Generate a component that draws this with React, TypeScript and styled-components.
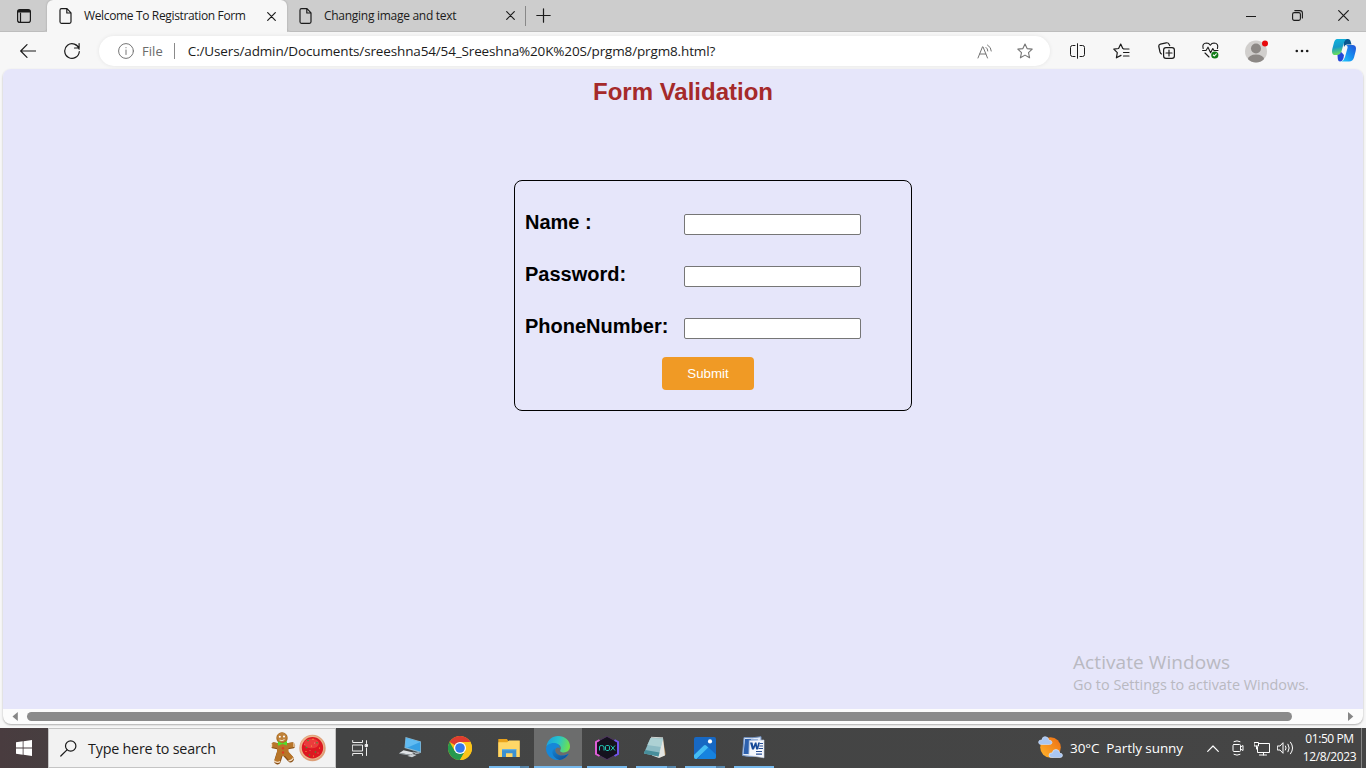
import React from "react";
import styled, { createGlobalStyle } from "styled-components";

const GlobalStyle = createGlobalStyle`
  * { box-sizing: border-box; }
  body { margin: 0; overflow: hidden; font-family: "Open Sans", "Noto Sans", sans-serif; }
  svg { display: block; flex: none; }
`;

const Screen = styled.div`
  width: 1366px;
  height: 768px;
  display: flex;
  flex-direction: column;
  background: #f7f7f7;
`;

const TabStrip = styled.header`
  height: 32px;
  flex: none;
  display: flex;
  background: #cdcdcd;
`;

const TabMenu = styled.div`
  width: 47px;
  display: flex;
  align-items: center;
  padding-left: 17px;
  border-bottom: 1px solid #bdbdbd;
  border-bottom-right-radius: 4px;
`;

const Tab = styled.div<{ $active?: boolean; $width: number }>`
  width: ${(p) => p.$width}px;
  display: flex;
  align-items: center;
  padding: 0 ${(p) => (p.$active ? 11 : 10)}px 0 12px;
  background: ${(p) => (p.$active ? "#f7f7f7" : "transparent")};
  border-radius: ${(p) => (p.$active ? "6px 6px 0 0" : "0 0 0 4px")};
  border-bottom: ${(p) => (p.$active ? "none" : "1px solid #bdbdbd")};
  box-shadow: ${(p) => (p.$active ? "0 0 2px #999" : "none")};
  clip-path: ${(p) => (p.$active ? "inset(0 -3px 0 -3px)" : "none")};
`;

const Label = styled.span<{ $size: number; $spacing?: number; $color?: string }>`
  font-size: ${(p) => p.$size}px;
  letter-spacing: ${(p) => p.$spacing ?? 0}px;
  color: ${(p) => p.$color ?? "#1b1b1b"};
  line-height: 20px;
  white-space: nowrap;
`;

const TabTitle = styled(Label)`
  flex: 1;
  margin-left: 12px;
`;

const NewTab = styled.div`
  flex: 1;
  display: flex;
  align-items: center;
  gap: 10px;
  border-bottom: 1px solid #bdbdbd;
`;

const Rule = styled.i<{ $height: number; $color: string }>`
  width: 1px;
  height: ${(p) => p.$height}px;
  background: ${(p) => p.$color};
`;

const WindowButtons = styled.div`
  display: flex;
  width: 138px;
  border-bottom: 1px solid #bdbdbd;
`;

const Slot = styled.div<{ $width: number }>`
  width: ${(p) => p.$width}px;
  flex: none;
  display: flex;
  align-items: center;
  justify-content: center;
`;

const Toolbar = styled.nav`
  height: 37px;
  flex: none;
  display: flex;
  padding-left: 6px;
`;

const AddressBar = styled.div`
  width: 951px;
  height: 30px;
  margin: 4px 5px 0 5px;
  padding: 0 5px 0 19px;
  display: flex;
  align-items: center;
  border-radius: 15px;
  background: #fff;
  box-shadow: 0 0 4px rgba(0, 0, 0, 0.08);
`;

const FileLabel = styled(Label)`
  margin: 0 11px 0 8px;
`;

const Url = styled(Label)`
  flex: 1;
  margin-left: 13px;
`;

const Viewport = styled.main`
  height: 655px;
  margin: 0 3px 4px;
  flex: none;
  display: flex;
  flex-direction: column;
  border-radius: 8px;
  overflow: hidden;
  background: #fcfcfc;
  box-shadow: 0 1px 2px rgba(0, 0, 0, 0.3);
`;

const Page = styled.section`
  height: 640px;
  position: relative;
  background: #e6e6fa;
  font-family: "Liberation Sans", Arial, sans-serif;
`;

const Heading = styled.h2`
  margin: 0;
  padding-top: 9px;
  font-size: 24px;
  line-height: 28px;
  text-align: center;
  color: #a52a2a;
`;

const Form = styled.form`
  width: 398px;
  height: 231px;
  margin: 74px 0 0 511px;
  padding: 27px 10px 0;
  border: 1px solid #000;
  border-radius: 8px;
`;

const Field = styled.label`
  height: 52px;
  display: grid;
  grid-template-columns: 159px 177px;
  align-items: start;
  font-size: 20px;
  font-weight: bold;
  line-height: 28px;
`;

const Input = styled.input`
  width: 177px;
  height: 21px;
  margin: 6px 0 0;
  border: 1px solid #767676;
  border-radius: 2px;
  background: #fff;
`;

const Submit = styled.button`
  display: block;
  width: 92px;
  height: 33px;
  margin: -7px 0 0 137px;
  padding: 0;
  border: 0;
  border-radius: 4px;
  background: #f09a25;
  color: #fff;
  font: 13.333px "Liberation Sans", Arial, sans-serif;
`;

const Watermark = styled.div`
  position: absolute;
  left: 1070px;
  top: 580px;
  display: flex;
  flex-direction: column;
  font-family: "Open Sans", sans-serif;
`;

const WatermarkTitle = styled(Label)`
  line-height: 26px;
`;

const ScrollBar = styled.div`
  height: 15px;
  display: flex;
  align-items: center;
  padding: 0 9px 0 9px;
`;

const Thumb = styled.div`
  width: 1265px;
  height: 9px;
  margin: 0 auto 0 9px;
  border-radius: 5px;
  background: #8b8b8b;
`;

const Taskbar = styled.footer`
  height: 40px;
  flex: none;
  display: flex;
  background: linear-gradient(90deg, #493c3f 0, #473e40 48px, #434444 340px, #454545 100%);
`;

const Search = styled.div`
  width: 288px;
  display: flex;
  align-items: center;
  padding: 0 9px 0 11px;
  border: 1px solid #c4c4c4;
  background: #f2f2f2;
`;

const SearchLabel = styled(Label)`
  flex: 1;
  margin-left: 11px;
  padding-top: 1px;
`;

const Apps = styled.div`
  display: flex;
  padding-left: 2px;
`;

const AppButton = styled.div<{ $active?: boolean }>`
  width: 49px;
  display: flex;
  flex-direction: column;
  align-items: center;
  justify-content: space-between;
  padding-top: 8px;
  background: ${(p) => (p.$active ? "linear-gradient(90deg,transparent 1px,#6c6d6d 1px)" : "transparent")};
`;

const Running = styled.i<{ $wide?: boolean; $stacked?: boolean }>`
  width: ${(p) => (p.$wide ? 48 : 40)}px;
  margin-left: ${(p) => (p.$wide ? 1 : 0)}px;
  height: 2px;
  background: ${(p) => (p.$stacked ? "linear-gradient(90deg,#76b9ed 31px,#5480a3 31px,#5a8bb1 40px)" : "#76b9ed")};
`;

const Weather = styled.div`
  display: flex;
  align-items: center;
  margin-left: auto;
  gap: 7px;
  width: 163px;
`;

const Tray = styled.div`
  display: flex;
  align-items: center;
`;

const Clock = styled.div`
  width: 63px;
  display: flex;
  flex-direction: column;
  align-items: center;
  padding-top: 2px;
`;

const ClockLine = styled(Label)`
  line-height: 18px;
`;

const ShowDesktop = styled.div`
  width: 5px;
  border-left: 1px solid #858585;
`;

type IconProps = { w: number; h: number; color?: string; sw?: number; children: React.ReactNode };

const Icon = ({ w, h, color = "#1b1b1b", sw = 1, children }: IconProps) => (
  <svg width={w} height={h} viewBox={`0 0 ${w} ${h}`} fill="none" stroke={color} strokeWidth={sw} strokeLinecap="round" strokeLinejoin="round">
    {children}
  </svg>
);

const PageIcon = () => (
  <Icon w={13} h={16} sw={1.2}>
    <path d="M2.5 .7H8L12 4.8V13.8Q12 15.3 10.5 15.3H2.5Q1 15.3 1 13.8V2.2Q1 .7 2.5 .7ZM7.8 1V5H12" />
  </Icon>
);

const CloseIcon = ({ size = 9 }: { size?: number }) => (
  <Icon w={size} h={size} sw={1.2}>
    <path d={`M.7 .7L${size - 0.7} ${size - 0.7}M${size - 0.7} .7L.7 ${size - 0.7}`} />
  </Icon>
);

const StartIcon = () => (
  <svg width="16" height="16" viewBox="0 0 16 16" fill="#fff">
    <path d="M0 2.3L6.7 1.3V7.5H0ZM7.5 1.2L16 0V7.5H7.5ZM0 8.4H6.7V14.7L0 13.7ZM7.5 8.4H16V16L7.5 14.8Z" />
  </svg>
);

const Gingerbread = () => (
  <svg width="26" height="33" viewBox="0 0 26 33">
    <g fill="none" stroke="#8a4f14" strokeLinecap="round">
      <path d="M4 13.5L12 15L22 13.5" strokeWidth="6.2" />
      <path d="M10 21L7.5 29M15 21L20.5 27" strokeWidth="6.6" />
    </g>
    <g fill="none" stroke="#b87528" strokeLinecap="round">
      <path d="M4 13L12 14.5L22 13" strokeWidth="5" />
      <path d="M10 20L7.5 28M15 20L20.5 26" strokeWidth="5.4" />
    </g>
    <rect x="7" y="11" width="11.5" height="13" rx="4" fill="#b87528" />
    <circle cx="12" cy="6" r="5.7" fill="#a9691f" />
    <circle cx="12" cy="5.6" r="4.8" fill="#be8139" />
    <g fill="#fff"><circle cx="9.8" cy="4.8" r="1" /><circle cx="14" cy="4.4" r="1" /></g>
    <path d="M9.5 8Q12 9.6 14.5 7.5" fill="none" stroke="#f2dfbd" />
    <path d="M7.8 9.3L12.5 11.3L17 9V13.5L12.5 12L8 13.8Z" fill="#52dd2b" />
    <circle cx="13" cy="16.3" r="1.2" fill="#dc3c22" /><circle cx="13" cy="20.5" r="1.2" fill="#dc3c22" />
    <path d="M1.6 11.5V15.5M24 11V15M3.8 28.8Q7 31.5 10.2 29.5M18.3 29Q22.5 28.5 23.4 25.8" fill="none" stroke="#f3dfc8" strokeWidth="1.2" />
  </svg>
);

const Cookie = () => (
  <svg width="27" height="28" viewBox="0 0 27 28">
    <circle cx="13.5" cy="14" r="13.2" fill="#dd9f78" />
    <circle cx="13" cy="13.5" r="12" fill="#edb48c" />
    <circle cx="13.5" cy="13.8" r="10.7" fill="#dd1821" />
    <ellipse cx="12.5" cy="9.5" rx="7.5" ry="4.8" fill="#f14b48" opacity=".7" />
    <g fill="#33a13b"><circle cx="9" cy="6.5" r=".8" /><circle cx="18" cy="8.7" r=".8" /><circle cx="7.5" cy="13.5" r=".8" /><circle cx="16.5" cy="18" r=".8" /><circle cx="10.5" cy="21" r=".8" /></g>
    <g fill="#ffb23e"><circle cx="14" cy="5.2" r=".6" /><circle cx="12.5" cy="12" r=".6" /><circle cx="20.5" cy="14" r=".6" /><circle cx="7" cy="17.5" r=".6" /><circle cx="14.5" cy="22" r=".6" /></g>
    <g fill="#ffe5d9"><circle cx="15.5" cy="9" r=".4" /><circle cx="5.8" cy="10.8" r=".4" /><circle cx="11" cy="16.3" r=".4" /><circle cx="19" cy="19" r=".4" /></g>
  </svg>
);

const ComputerIcon = () => (
  <svg width="24" height="24" viewBox="0 0 24 24">
    <path d="M6.5 1L22 5.5V17L5.5 12Z" fill="#8fb9cf" />
    <path d="M7 2L21.3 6V15.5L6.5 11.3Z" fill="#369fe4" />
    <path d="M7 2L21.3 6L8 11.8L6.5 11.3Z" fill="#60bbf2" />
    <path d="M4.5 14.3L15.5 16.7L11.5 18.7L.5 17Z" fill="#dfe2e5" />
    <path d="M.5 17L11.5 18.7L10.5 19.6L0 17.8Z" fill="#9ca5ab" />
    <path d="M14 15.5L17 16.5L20.5 16V17.5L16.5 18.3Z" fill="#aab3b9" />
    <path d="M8.5 20L13.5 18L17.5 19L13 21.3Z" fill="#cbd0d4" />
  </svg>
);

const ChromeIcon = () => (
  <svg width="24" height="24" viewBox="0 0 24 24">
    <circle cx="12" cy="12" r="12" fill="#fbc116" />
    <path d="M12 12L1.6 6A12 12 0 0 1 22.4 6H12Z" fill="#df3c30" />
    <path d="M1.6 6A12 12 0 0 0 12 24L17.2 15L12 12L6.8 15Z" fill="#26994d" />
    <path d="M12 6H22.4A12 12 0 0 1 12 24L17.2 15Z" fill="#fcc419" />
    <circle cx="12" cy="12" r="6.1" fill="#fff" />
    <circle cx="12" cy="12" r="4.8" fill="#3478ec" />
  </svg>
);

const FolderIcon = () => (
  <svg width="24" height="24" viewBox="0 0 24 24">
    <path d="M1.3 3H10L11.2 5H22.5V21H1.3Z" fill="#e9a21b" />
    <path d="M1.3 6.2H10.2L12 4.4H22.7V21H1.3Z" fill="#ffd767" />
    <path d="M5 21V13.2H19.3V21H15.5V17.2H9V21Z" fill="#3b91d2" />
    <path d="M5 13.2H19.3V14.2H5Z" fill="#69b6e8" />
  </svg>
);

const EdgeIcon = () => (
  <svg width="24" height="24" viewBox="0 0 24 24">
    <defs>
      <linearGradient id="eg" x1="0" x2="1" y1=".2" y2=".4"><stop stopColor="#1a9fe0" /><stop offset=".5" stopColor="#27c4cb" /><stop offset="1" stopColor="#6ee14e" /></linearGradient>
      <linearGradient id="eb" x1="0" x2="1" y1="0" y2="1"><stop stopColor="#1484d4" /><stop offset="1" stopColor="#114a8e" /></linearGradient>
    </defs>
    <path d="M.3 10.5C1.5 4 6.3 0 12 0C19 0 24 4.6 24 10.3C24 14.5 21 16.5 17.8 16.5C14.8 16.5 13.5 15 14.5 13.7C15.7 12 14.5 8.3 10 8C5 7.6 1.7 9.5 .3 10.5Z" fill="url(#eg)" />
    <path d="M0 12.5C.2 8.7 4.8 6.4 9 7C12.2 7.5 14.2 9.7 13.7 12C12.2 10.7 9 11.5 9.2 14.7C9.5 18.5 14.5 21.4 20 18.7C21.4 18 22.4 17.5 22.6 17.8C19.5 24 11.8 25.5 6 22.4C2.4 20.5 0 16.8 0 12.5Z" fill="#1687d8" />
    <path d="M9.4 12.2C3.8 14 6.2 22 13.5 24C17.8 23.5 21.2 20.7 22.6 17.8C17.5 21 11.5 19.5 9.6 16.2C8.8 14.7 8.8 13.3 9.4 12.2Z" fill="url(#eb)" />
  </svg>
);

const NoxIcon = () => (
  <svg width="24" height="24" viewBox="0 0 24 24" fill="none">
    <path d="M12 .4L22.8 6.2V17.8L12 23.6L1.2 17.8V6.2Z" fill="#15121e" stroke="#56326b" strokeWidth=".8" />
    <path d="M4.5 4L1 6V18L4.5 20" stroke="#df5ed6" strokeWidth="2" />
    <path d="M19.5 4L23 6V18L19.5 20" stroke="#7154ed" strokeWidth="2" />
    <path d="M4.5 14.5V11Q4.5 9.5 6.3 9.5Q9 9.5 9 11V14.5M10.5 10.7Q10.5 9.5 11.5 9.5H13.2Q14.5 9.5 14.5 10.7V13Q14.5 14.5 13.2 14.5H11.5Q10.5 14.5 10.5 13ZM15.8 9.5L20 14.5M20 9.5L15.8 14.5" stroke="#22c9b5" />
  </svg>
);

const NotepadIcon = () => (
  <svg width="24" height="24" viewBox="0 0 24 24">
    <path d="M19 3L21.8 18.5L16 21.5Z" fill="#a47a42" />
    <path d="M19 2L21 19.5L15 22L8 19.5Z" fill="#e3e5e2" />
    <path d="M6.5 2L19 2.3L14.5 20.5L-.2 17.5Z" fill="#8cbbc4" />
    <path d="M6.5 2L19 2.3L17 11L3.3 9Z" fill="#b8d8d9" opacity=".75" />
    <path d="M-.2 17.5L14.5 20.5L15.5 16.5L1.3 14Z" fill="#478e9b" />
    <path d="M7 1.3L19 1.8" stroke="#cfd5d3" strokeWidth="1" />
  </svg>
);

const PhotosIcon = () => (
  <svg width="24" height="24" viewBox="0 0 24 24">
    <rect x="1" y="1" width="22" height="22" rx="2" fill="#1768c3" />
    <path d="M12 14L14.5 10.5L23 18.5V21Q23 23 21 23H5Z" fill="#1683df" />
    <path d="M1 19L10.8 9.4Q12 8.4 13.2 9.4L15.2 11.4L3.5 23H3Q1 23 1 21Z" fill="#45bdf4" />
    <circle cx="17" cy="5.4" r="2.1" fill="#fff" />
  </svg>
);

const WordIcon = () => (
  <svg width="24" height="24" viewBox="0 0 24 24">
    <path d="M2 1.5Q10 2.5 19 .7V18.5Q9 22 .5 19.5Z" fill="#dfe9f7" stroke="#7292c3" />
    <path d="M3 3H9L7 18H1.5Z" fill="#2d60ad" />
    <path d="M6.5 3.5L16 3.5L14 19L6 18Z" fill="#4e7bbd" />
    <path d="M7.5 4.7L22 4V21.8L7 19.5Z" fill="#f5f7fb" stroke="#c7d3e7" strokeWidth=".6" />
    <path d="M8 6.5H10.5L11.4 10.5L13 6.5H14.5L15.2 10.5L16.2 6.5H18L16 13.5H14.2L13.4 10L11.9 13.5H10Z" fill="#174a98" />
    <path d="M17.8 7.5H21M17.3 10H21M16.5 12.5H21M14 15.5H20M14 18.2H20" stroke="#284f95" strokeWidth="1.2" />
  </svg>
);

const CopilotIcon = () => (
  <svg width="24" height="23" viewBox="0 0 24 23">
    <defs>
      <linearGradient id="ca" x1="0" x2=".2" y1="0" y2="1"><stop stopColor="#10b5df" /><stop offset=".55" stopColor="#169ac9" /><stop offset="1" stopColor="#6ce05a" /></linearGradient>
      <linearGradient id="cb" x1="1" x2="0" y1="0" y2="1"><stop stopColor="#2451d6" /><stop offset=".5" stopColor="#168df0" /><stop offset="1" stopColor="#22cbfb" /></linearGradient>
    </defs>
    <path d="M11 0H16Q18.2 0 18.8 3L19.5 5.5H15Q12.8 5.5 12 8Z" fill="#07568f" />
    <path d="M5 0H15Q12.6 1 11.8 4L9.5 12.5Q8.4 16 5.5 16H3.5Q-1 16 .3 10L2 3.5Q3 0 5 0Z" fill="url(#ca)" />
    <path d="M14 6H20.5Q25 6 23.7 12L22 18.5Q20.8 22.5 17 22.5H9.5Q12 21.5 13 18L15.5 9Q16 6.5 14 6Z" fill="url(#cb)" />
    <path d="M5.5 16Q8 16 9.2 13L12 16L11.5 19Q10.3 22.5 8 22.5Q6.2 22.5 5.8 20Z" fill="#2348d7" />
  </svg>
);

const WeatherIcon = () => (
  <svg width="26" height="24" viewBox="-1 0 26 24">
    <defs><linearGradient id="sun" x1="0" x2="1" y1="1" y2="0"><stop stopColor="#ffb52c" /><stop offset="1" stopColor="#ed6d13" /></linearGradient></defs>
    <circle cx="12.5" cy="11.5" r="10.3" fill="url(#sun)" />
    <path d="M3.2 8.5H11.5Q14 8.5 14 6.3Q13.8 4.2 11 4.3Q10.3 .5 6.9 .7Q4 .9 4 4Q.6 3.8 .6 6.3Q.7 8.5 3.2 8.5Z" fill="#a9c6f2" stroke="#cbdcf8" strokeWidth=".7" />
    <path d="M13.5 21.5H22Q24.5 21.5 24.5 19.3Q24.3 17.1 21.8 17.3Q21.2 13.5 18 13.5Q14.7 13.5 14.4 16.8Q11 16.7 11 19.2Q11 21.5 13.5 21.5Z" fill="#a9c6f2" stroke="#d9e6fb" strokeWidth=".7" />
  </svg>
);

const starPath = "M8 1L10.1 5.6L15.2 6.1L11.5 9.6L12.6 14.8L8 12.1L3.4 14.8L4.5 9.6L.8 6.1L5.9 5.6Z";

const apps: { icon: React.ReactNode; run?: boolean; active?: boolean; stacked?: boolean }[] = [
  { icon: <ComputerIcon /> },
  { icon: <ChromeIcon /> },
  { icon: <FolderIcon />, run: true, stacked: true },
  { icon: <EdgeIcon />, run: true, active: true },
  { icon: <NoxIcon />, run: true },
  { icon: <NotepadIcon />, run: true, stacked: true },
  { icon: <PhotosIcon />, run: true, stacked: true },
  { icon: <WordIcon />, run: true },
];

export default function App() {
  return (
    <Screen>
      <GlobalStyle />
      <TabStrip>
        <TabMenu>
          <Icon w={14} h={14} sw={1.2}>
            <rect x=".6" y=".6" width="12.8" height="12.8" rx="2.2" />
            <path d="M1.5 1.5H12.5V3H1.5Z" fill="#1b1b1b" />
            <path d="M3.5 4V13" />
          </Icon>
        </TabMenu>
        <Tab $active $width={240}>
          <PageIcon />
          <TabTitle $size={12} $spacing={-0.35}>Welcome To Registration Form</TabTitle>
          <CloseIcon />
        </Tab>
        <Tab $width={238}>
          <PageIcon />
          <TabTitle $size={12} $spacing={-0.28}>Changing image and text</TabTitle>
          <CloseIcon />
        </Tab>
        <NewTab>
          <Rule $height={20} $color="#888" />
          <Icon w={15} h={15} sw={1.2}><path d="M7.5 .8V14.2M.8 7.5H14.2" /></Icon>
        </NewTab>
        <WindowButtons>
          <Slot $width={46}><Icon w={10} h={10}><path d="M0 5.5H10" /></Icon></Slot>
          <Slot $width={46}>
            <Icon w={11} h={11} sw={1.1}><rect x=".6" y="2.6" width="7.8" height="7.8" rx="1.6" /><path d="M2.8 .6H8Q10.4 .6 10.4 3V8" /></Icon>
          </Slot>
          <Slot $width={46}><CloseIcon size={11} /></Slot>
        </WindowButtons>
      </TabStrip>

      <Toolbar>
        <Slot $width={44}><Icon w={16} h={14} sw={1.2}><path d="M7 .7L.7 7L7 13.3M1 7H15.5" /></Icon></Slot>
        <Slot $width={44}><Icon w={18} h={17} sw={1.2}><path d="M16.1 7.2A7.3 7.3 0 1 0 16.3 9.5M16.1 1.5V6H11.5" /></Icon></Slot>
        <AddressBar>
          <Icon w={16} h={16} color="#757575"><circle cx="8" cy="8" r="7.4" /><path d="M8 7V11.5M8 4.6V4.8" /></Icon>
          <FileLabel $size={13} $spacing={0.05} $color="#6b6b6b">File</FileLabel>
          <Rule $height={16} $color="#8a8a8a" />
          <Url $size={13.5} $spacing={-0.14}>C:/Users/admin/Documents/sreeshna54/54_Sreeshna%20K%20S/prgm8/prgm8.html?</Url>
          <Slot $width={40}>
            <Icon w={16} h={15} color="#757575"><path d="M1 14L5.5 2.8H6L10.5 14M2.7 10H8.8M9 3.4Q10.8 4.5 10.8 7M10.5 1Q14.3 3.2 14.3 7" /></Icon>
          </Slot>
          <Slot $width={40}><Icon w={16} h={16} color="#757575" sw={1.1}><path d={starPath} /></Icon></Slot>
        </AddressBar>
        <Slot $width={44}>
          <Icon w={15} h={16}><path d="M5 2.5H2.5Q.5 2.5 .5 4.5V11.5Q.5 13.5 2.5 13.5H5M10 2.5H12.5Q14.5 2.5 14.5 4.5V11.5Q14.5 13.5 12.5 13.5H10M7.5 .7V15.3" /></Icon>
        </Slot>
        <Slot $width={45}>
          <Icon w={17} h={16} sw={1.2}><path d="M11.5 6L9.8 5.5L7.7 1L5.6 5.5L.8 6.1L4.3 9.6L3.4 14.8L8 12.4M10.5 6H16M10.5 9.5H16M10.5 13H16" /></Icon>
        </Slot>
        <Slot $width={44}>
          <Icon w={17} h={17} sw={1.2}><rect x="5.6" y="5.6" width="10.8" height="10.8" rx="2.4" /><path d="M11 8V14M8 11H14M3.5 12Q2.5 11.6 2 10L.8 4.5Q.5 2.6 2.4 2.1L8.2 .8Q10.3 .4 11.2 2.5L11.7 3.5" /></Icon>
        </Slot>
        <Slot $width={44}>
          <Icon w={17} h={17} sw={1.1}>
            <path d="M1.2 6.5Q-.2 1.2 4.5 1Q7 1 8.3 3.2Q9.7 1 12 1Q16.8 1.2 15.4 6.5M.6 8.5H4L6 5.2L8.6 10.8L10.8 6.5L12 8.5H16M3 11L7 15" />
            <circle cx="12.8" cy="13" r="3.6" fill="#0f7b16" stroke="none" /><path d="M11.3 13L12.4 14L14.3 11.8" stroke="#fff" />
          </Icon>
        </Slot>
        <Slot $width={48}>
          <svg width="24" height="24" viewBox="0 0 24 24">
            <defs><clipPath id="face"><circle cx="12" cy="12.5" r="11" /></clipPath></defs>
            <circle cx="12" cy="12.5" r="11" fill="#d1cfcd" />
            <g fill="#8c8885" clipPath="url(#face)"><circle cx="12" cy="9.5" r="5" /><ellipse cx="12" cy="20.5" rx="8.2" ry="5" /></g>
            <circle cx="21" cy="4.5" r="3" fill="#e8090d" />
          </svg>
        </Slot>
        <Slot $width={44}>
          <svg width="14" height="4" viewBox="0 0 14 4" fill="#1b1b1b"><circle cx="1.8" cy="2" r="1.3" /><circle cx="7" cy="2" r="1.3" /><circle cx="12.2" cy="2" r="1.3" /></svg>
        </Slot>
        <Slot $width={40}><CopilotIcon /></Slot>
      </Toolbar>

      <Viewport>
        <Page>
          <Heading>Form Validation</Heading>
          <Form onSubmit={(e) => e.preventDefault()}>
            <Field>Name :<Input type="text" /></Field>
            <Field>Password:<Input type="password" /></Field>
            <Field>PhoneNumber:<Input type="text" /></Field>
            <Submit>Submit</Submit>
          </Form>
          <Watermark>
            <WatermarkTitle $size={19} $spacing={0.08} $color="#b9b9c1">Activate Windows</WatermarkTitle>
            <Label $size={14.4} $color="#b9b9c1">Go to Settings to activate Windows.</Label>
          </Watermark>
        </Page>
        <ScrollBar>
          <svg width="6" height="9" viewBox="0 0 6 9" fill="#868686"><path d="M5.8 0V9L.5 4.5Z" /></svg>
          <Thumb />
          <svg width="6" height="9" viewBox="0 0 6 9" fill="#868686"><path d="M0 0V9L5.3 4.5Z" /></svg>
        </ScrollBar>
      </Viewport>

      <Taskbar>
        <Slot $width={48}><StartIcon /></Slot>
        <Search>
          <Icon w={17} h={17} sw={1.2}><circle cx="10.7" cy="6" r="5.2" /><path d="M7 9.8L.8 16" /></Icon>
          <SearchLabel $size={14.3} $spacing={-0.2}>Type here to search</SearchLabel>
          <Gingerbread />
          <Slot $width={3} />
          <Cookie />
        </Search>
        <Slot $width={48}>
          <Icon w={17} h={16} color="#eee"><path d="M.7 .5V2.5H10.5V.5M.7 15.5V13.5H10.5V15.5M.7 5H10.5V11H.7ZM14.5 .7V3.5M14.5 8V15.5" /><rect x="13.5" y="4.5" width="2" height="2" fill="#fff" /></Icon>
        </Slot>
        <Apps>
          {apps.map((a, i) => (
            <AppButton key={i} $active={a.active}>
              {a.icon}
              {a.run && <Running $wide={a.active} $stacked={a.stacked} />}
            </AppButton>
          ))}
        </Apps>
        <Weather>
          <WeatherIcon />
          <Label $size={13.5} $spacing={-0.08} $color="#fff">30°C&nbsp; Partly sunny</Label>
        </Weather>
        <Tray>
          <Slot $width={25}><Icon w={12} h={7} color="#fff" sw={1.2}><path d="M.7 6.3L6 1L11.3 6.3" /></Icon></Slot>
          <Slot $width={25}><Icon w={12} h={16} color="#fff"><rect x="1" y="4.5" width="7.5" height="7" rx="1" /><path d="M8.5 7L11 5.5V10.5L8.5 9M2 1.6Q5 0 8 1.6M2 14.4Q5 16 8 14.4" /></Icon></Slot>
          <Slot $width={23}><Icon w={16} h={15} color="#fff"><path d="M5 2.5H15.5V11.5H3.5V6M9.5 11.5V14M5.5 14H12.5M.5 1.5H4.5V5H.5ZM2.5 5V8" /></Icon></Slot>
          <Slot $width={25}><Icon w={17} h={14} color="#fff"><path d="M.7 5H3L6 1.7V12.3L3 9H.7ZM8.5 5Q9.8 7 8.5 9M11 3.2Q13.5 7 11 10.8M13.5 1.2Q17.8 7 13.5 12.8" /></Icon></Slot>
        </Tray>
        <Clock>
          <ClockLine $size={12} $spacing={-0.4} $color="#fff">01:50 PM</ClockLine>
          <ClockLine $size={12} $spacing={-0.38} $color="#fff">12/8/2023</ClockLine>
        </Clock>
        <ShowDesktop />
      </Taskbar>
    </Screen>
  );
}
